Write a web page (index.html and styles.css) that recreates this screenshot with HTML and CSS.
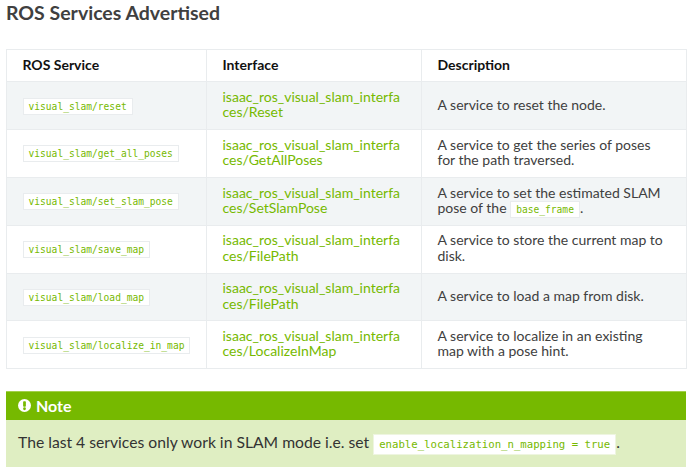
FILE: index.html
```html
<!DOCTYPE html>
<html lang="en">
<head>
<meta charset="utf-8">
<title>ROS Services Advertised</title>
<link rel="stylesheet" href="styles.css">
</head>
<body>
<h2 class="title">ROS Services Advertised</h2>
<table class="services">
<colgroup><col class="c1"><col class="c2"><col class="c3"></colgroup>
<thead><tr><th>ROS Service</th><th>Interface</th><th>Description</th></tr></thead>
<tbody>
<tr><td><code class="lit">visual_slam/reset</code></td><td><a href="#">isaac_ros_visual_slam_interfaces/Reset</a></td><td>A service to reset the node.</td></tr>
<tr><td><code class="lit">visual_slam/get_all_poses</code></td><td><a href="#">isaac_ros_visual_slam_interfaces/GetAllPoses</a></td><td>A service to get the series of poses for the path traversed.</td></tr>
<tr><td><code class="lit">visual_slam/set_slam_pose</code></td><td><a href="#">isaac_ros_visual_slam_interfaces/SetSlamPose</a></td><td>A service to set the estimated SLAM pose of the <code class="lit">base_frame</code>.</td></tr>
<tr><td><code class="lit">visual_slam/save_map</code></td><td><a href="#">isaac_ros_visual_slam_interfaces/FilePath</a></td><td>A service to store the current map to disk.</td></tr>
<tr><td><code class="lit">visual_slam/load_map</code></td><td><a href="#">isaac_ros_visual_slam_interfaces/FilePath</a></td><td>A service to load a map from disk.</td></tr>
<tr><td><code class="lit">visual_slam/localize_in_map</code></td><td><a href="#">isaac_ros_visual_slam_interfaces/LocalizeInMap</a></td><td>A service to localize in an existing map with a pose hint.</td></tr>
</tbody>
</table>
<section class="note">
<div class="note-title"><svg class="note-icon" viewBox="0 0 16 16" aria-hidden="true"><circle cx="8" cy="8" r="8" fill="#fff"/><rect x="6.3" y="2.8" width="3.4" height="6.8" rx="1" fill="#76b900"/><circle cx="8" cy="12" r="1.7" fill="#76b900"/></svg>Note</div>
<p class="note-body">The last 4 services only work in SLAM mode i.e. set <code class="lit lit-note">enable_localization_n_mapping = true</code>.</p>
</section>
</body>
</html>
```
FILE: styles.css
```css
html, body { margin: 0; padding: 0; background: #fff; }
body { width: 690px; height: 469px; overflow: hidden; font-family: Lato, sans-serif; font-size: 14px; color: #404040; padding: 0 4px 0 6px; box-sizing: border-box; }
.title { margin: 0; padding-top: 2px; font-size: 19.5px; line-height: 22px; font-weight: 700; color: #404040; }
.services { margin-top: 25px; width: 680px; table-layout: fixed; border-collapse: collapse; line-height: 15.4px; font-size: 14px; }
.c1 { width: 200px; } .c2 { width: 215px; } .c3 { width: 265px; }
.services th, .services td { border: 1px solid #e9ecee; padding: 6.5px 15.5px 9.5px; text-align: left; vertical-align: middle; }
.services td { overflow-wrap: anywhere; height: 30.67px; box-sizing: content-box; }
.services th { font-weight: 700; color: #111; }
.services tbody tr:nth-child(odd) { background: #f2f5f6; }
a { color: #76b900; text-decoration: none; }
.lit { font-family: "DejaVu Sans Mono", monospace; font-size: 9.6px; line-height: 11px; color: #76b900; background: #fff; border: 1px solid #e9ecee; padding: 2px 5px; white-space: nowrap; }
.note { margin-top: 22px; width: 680px; background: #dfeec2; }
.note-title { display: flex; align-items: center; gap: 5px; height: 29px; background: #76b900; border-top: 1px solid #a2d04a; box-sizing: border-box; padding: 0 0 2px 12px; color: #fff; font-weight: 700; font-size: 16px; }
.note-icon { width: 13px; height: 13px; }
.note-body { margin: 0; padding: 13px 12px 15px; font-size: 15.7px; line-height: 19px; color: #333; }
.lit-note { font-size: 10.67px; border: 1px solid #eef5e0; padding: 3px 5px; }
```
